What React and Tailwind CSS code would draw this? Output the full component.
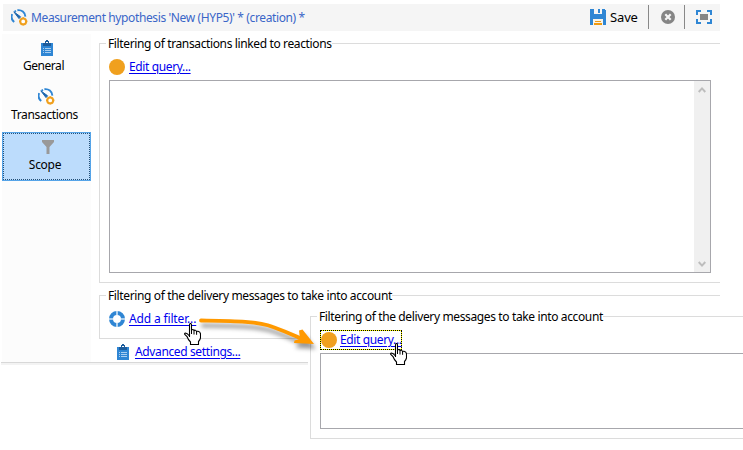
import React from "react";

function Gauge() {
  return (
    <svg className="h-[17px] w-[17px] shrink-0" viewBox="0 0 17 17" fill="none">
      <path d="M3.2 13A6.600 6.600 0 0 1 1.200 5.200M3.600 2.800A6.600 6.600 0 0 1 5 1.700M6.400 1.200A6.800 6.800 0 0 1 14.400 7.600" stroke="#2f86d4" strokeWidth="1.900" />
      <path d="M2.800 2.800L9.600 7.800L8 9.600Z" fill="#1d66ad" stroke="#1d66ad" strokeWidth="1" />
      <circle cx="12.200" cy="12.400" r="2.900" stroke="#f0a01e" strokeWidth="2" fill="#fff" />
      <path d="M12.200 8.200v1.400M12.200 15.200v1.400M8 12.400h1.400M15 12.400h1.400" stroke="#f0a01e" strokeWidth="1.600" />
    </svg>
  );
}

function Clipboard() {
  return (
    <svg className="h-4 w-3 shrink-0" viewBox="0 0 12 16" shapeRendering="crispEdges">
      <path d="M0 3h12v13H0z" fill="#2f86d4" />
      <path d="M2 3h8v3H2z" fill="#1c5c9c" />
      <path d="M4 1h4v3H4zM5 0h2v1H5z" fill="#1c5c9c" />
      <path d="M5 2h2v1H5z" fill="#fff" />
      <path d="M2 8h1v1H2zM4 8h6v1H4zM2 10h1v1H2zM4 10h6v1H4zM2 12h1v1H2zM4 12h6v1H4z" fill="#a9cef0" />
    </svg>
  );
}

function Hand({ className }) {
  return (
    <svg className={className} viewBox="0 0 17 22">
      <path
        d="M5.500 14V2Q5.500.5 6.500.5T7.500 2V7.500Q7.500 6.500 8.700 6.500T10 8Q10.200 7 11.300 7.200T12.600 8.800Q13 8 14 8.300Q16.500 9 16.500 11V15Q16 17 14.500 18.500V21.500H6.500V19Q4 16.500 3 13.500L.8 11.500Q.2 10.300 1.500 10Q3 10 5.500 13Z"
        fill="#fff"
        stroke="#000"
        strokeWidth="1.100"
      />
      <path d="M7.500 7v4M10 8v3.500M12.600 8.800v3" stroke="#000" strokeWidth="1" />
    </svg>
  );
}

const linkText =
  "whitespace-nowrap text-[12px] leading-4 tracking-[-0.37px] text-[#0000ee] underline underline-offset-[2px] decoration-1";

function Disc() {
  return <span className="h-4 w-4 shrink-0 rounded-full bg-[#f0a01e]" />;
}

function Header() {
  return (
    <header className="ml-[3px] flex h-[27px] w-[717px] items-center bg-[#f5f5f5] pl-2">
      <Gauge />
      <h1 className="ml-[3px] text-[12px] leading-4 tracking-[-0.38px] text-[#3a66c8]">
        Measurement hypothesis 'New (HYP5)' * (creation) *
      </h1>
      <div className="ml-auto flex h-full items-center">
        <svg className="-mt-px h-4 w-4" viewBox="0 0 16 16" shapeRendering="crispEdges">
          <path d="M0 0h14l2 2v14H0z" fill="#2f86d4" />
          <path d="M4 0h8v5H4z" fill="#f5f5f5" />
          <path d="M8 0h2v4H8z" fill="#2f86d4" />
          <path d="M3 10h10v6H3z" fill="#f8f4ea" />
          <path d="M5 12h6v1H5zM4 14h8v2H4z" fill="#f09a10" />
        </svg>
        <span className="-mt-0.5 ml-1 w-[37px] text-[13px] leading-4 tracking-[-0.15px]">Save</span>
        <span className="-mt-px ml-px h-6 w-px bg-[#888]" />
        <svg className="-mt-px ml-[12px] h-[14px] w-[14px]" viewBox="0 0 14 14">
          <circle cx="7" cy="7" r="7" fill="#858585" />
          <path d="M4.300 4.300l5.400 5.400M9.700 4.300l-5.400 5.400" stroke="#f5f5f5" strokeWidth="2.200" />
        </svg>
        <span className="-mt-px ml-[9px] h-6 w-px bg-[#888]" />
        <svg className="-mt-px mr-2 ml-[11px] h-[14px] w-4" viewBox="0 0 16 14" shapeRendering="crispEdges">
          <path d="M0 0h5v2H2v3H0zM11 0h5v5h-2V2h-3zM0 9h2v3h3v2H0zM14 9h2v5h-5v-2h3z" fill="#2f86d4" />
          <path d="M4 4h8v6H4z" fill="#858585" />
        </svg>
      </div>
    </header>
  );
}

function Sidebar() {
  return (
    <nav className="ml-0.5 flex w-[89px] flex-col bg-[#fcfcfc] text-center text-[12px] leading-4">
      <div className="flex h-[49px] flex-col items-center pt-[6px]">
        <Clipboard />
        <span className="mt-[2px] -ml-1.5 tracking-[-0.45px]">General</span>
      </div>
      <div className="flex h-[49px] flex-col items-center pt-[5px]">
        <Gauge />
        <span className="mt-[2px] -ml-1 tracking-[-0.33px]">Transactions</span>
      </div>
      <div className="h-[49px] border border-[#56a4e8] bg-[#bcdcfc]">
        <div className="flex h-full flex-col items-center border border-dotted border-[#235078] pt-[6px]">
          <svg className="ml-0.5 h-[14px] w-3" viewBox="0 0 12 14">
            <path d="M0 0h12v2L7.500 7v7h-3V7L0 2z" fill="#999" />
          </svg>
          <span className="mt-[3px] -ml-[3px] tracking-[-0.3px]">Scope</span>
        </div>
      </div>
    </nav>
  );
}

function Chevron({ down }) {
  return (
    <svg className="-ml-px h-2 w-2" viewBox="0 0 8 8" fill="none">
      <path d={down ? "M.7 2L4 5.600L7.300 2" : "M.7 6L4 2.400L7.300 6"} stroke="#bdbdbd" strokeWidth="2" />
    </svg>
  );
}

function Group({ title, className, children }) {
  return (
    <fieldset className={"min-w-0 border border-r-0 border-[#dcdcdc] pl-[9px] " + className}>
      <legend className="-ml-[3px] h-[15px] pl-[2px] text-[12px] leading-[15px] tracking-[-0.37px] whitespace-nowrap">{title}</legend>
      {children}
    </fieldset>
  );
}

export default function App() {
  return (
    <div className="relative h-[450px] w-[743px] overflow-hidden bg-white pt-1 font-['Noto_Sans','Open_Sans',sans-serif] text-black">
      <Header />
      <div className="mt-[3px] flex h-[328px] w-[720px]">
        <Sidebar />
        <main className="ml-2 flex min-w-0 flex-1 flex-col pt-[2px]">
          <Group title="Filtering of transactions linked to reactions" className="h-[247px]">
            <div className="mt-[8px] flex h-4 items-center">
              <Disc />
              <a className={"ml-1 " + linkText}>Edit query...</a>
            </div>
            <div className="mt-[5px] flex h-[193px] w-[602px] justify-end border border-[#a7a7ac]">
              <div className="flex w-4 flex-col items-center justify-between bg-[#f0f0f0] pt-[5px] pb-1">
                <Chevron />
                <Chevron down />
              </div>
            </div>
          </Group>
          <Group title="Filtering of the delivery messages to take into account" className="mt-[5px] h-[51px]">
            <div className="mt-[8px] flex h-4 items-center">
              <svg className="h-4 w-4" viewBox="0 0 16 16" fill="none">
                <circle cx="8" cy="8" r="6" stroke="#2f86d4" strokeWidth="4" />
                <path d="M8 0v4M8 12v4M0 8h4M12 8h4" stroke="#d4e6f7" strokeWidth="1.600" />
              </svg>
              <a className={"ml-1 " + linkText}>
                <span className="tracking-[-0.15px]">Add a filter...</span>
              </a>
            </div>
          </Group>
          <div className="mt-[5px] ml-[18px] flex h-4 items-center">
            <Clipboard />
            <a className={"ml-[6px] " + linkText}>Advanced settings...</a>
          </div>
        </main>
      </div>
      <div className="ml-px h-[3px] w-[307px] border-t border-[#d8d8d8] bg-[#f3f3f3]" />

      <section className="absolute top-[309px] left-[308px] w-[435px] bg-white pl-[2px]">
        <Group title="Filtering of the delivery messages to take into account" className="h-[130px]">
          <div className="mt-[6px] h-5 w-[82px] border border-dotted border-black bg-[#ffff00]">
            <div className="flex h-[18px] w-20 items-center bg-white">
              <Disc />
              <a className={"ml-[3px] " + linkText}>Edit query...</a>
            </div>
          </div>
          <div className="mt-[3px] h-[76px] border border-r-0 border-[#a7a7ac]" />
        </Group>
      </section>

      <svg className="absolute top-[308px] left-[195px] h-[50px] w-[130px] drop-shadow-[2px_5px_2px_rgba(0,0,0,0.4)]" viewBox="195 308 130 50" fill="none">
        <path d="M201 320.500C232 321 258 321 273 327C287 332 295 336 302 339" stroke="#ff9900" strokeWidth="3.800" strokeLinecap="round" />
        <path d="M299 330.500L302.500 329.500L314 344L294 343L294.500 340.500L300 339Z" fill="#ff9900" />
      </svg>
      <Hand className="absolute top-[323px] left-[184px] h-[22px] w-[17px]" />
      <Hand className="absolute top-[343px] left-[390px] h-[22px] w-[17px]" />
    </div>
  );
}
